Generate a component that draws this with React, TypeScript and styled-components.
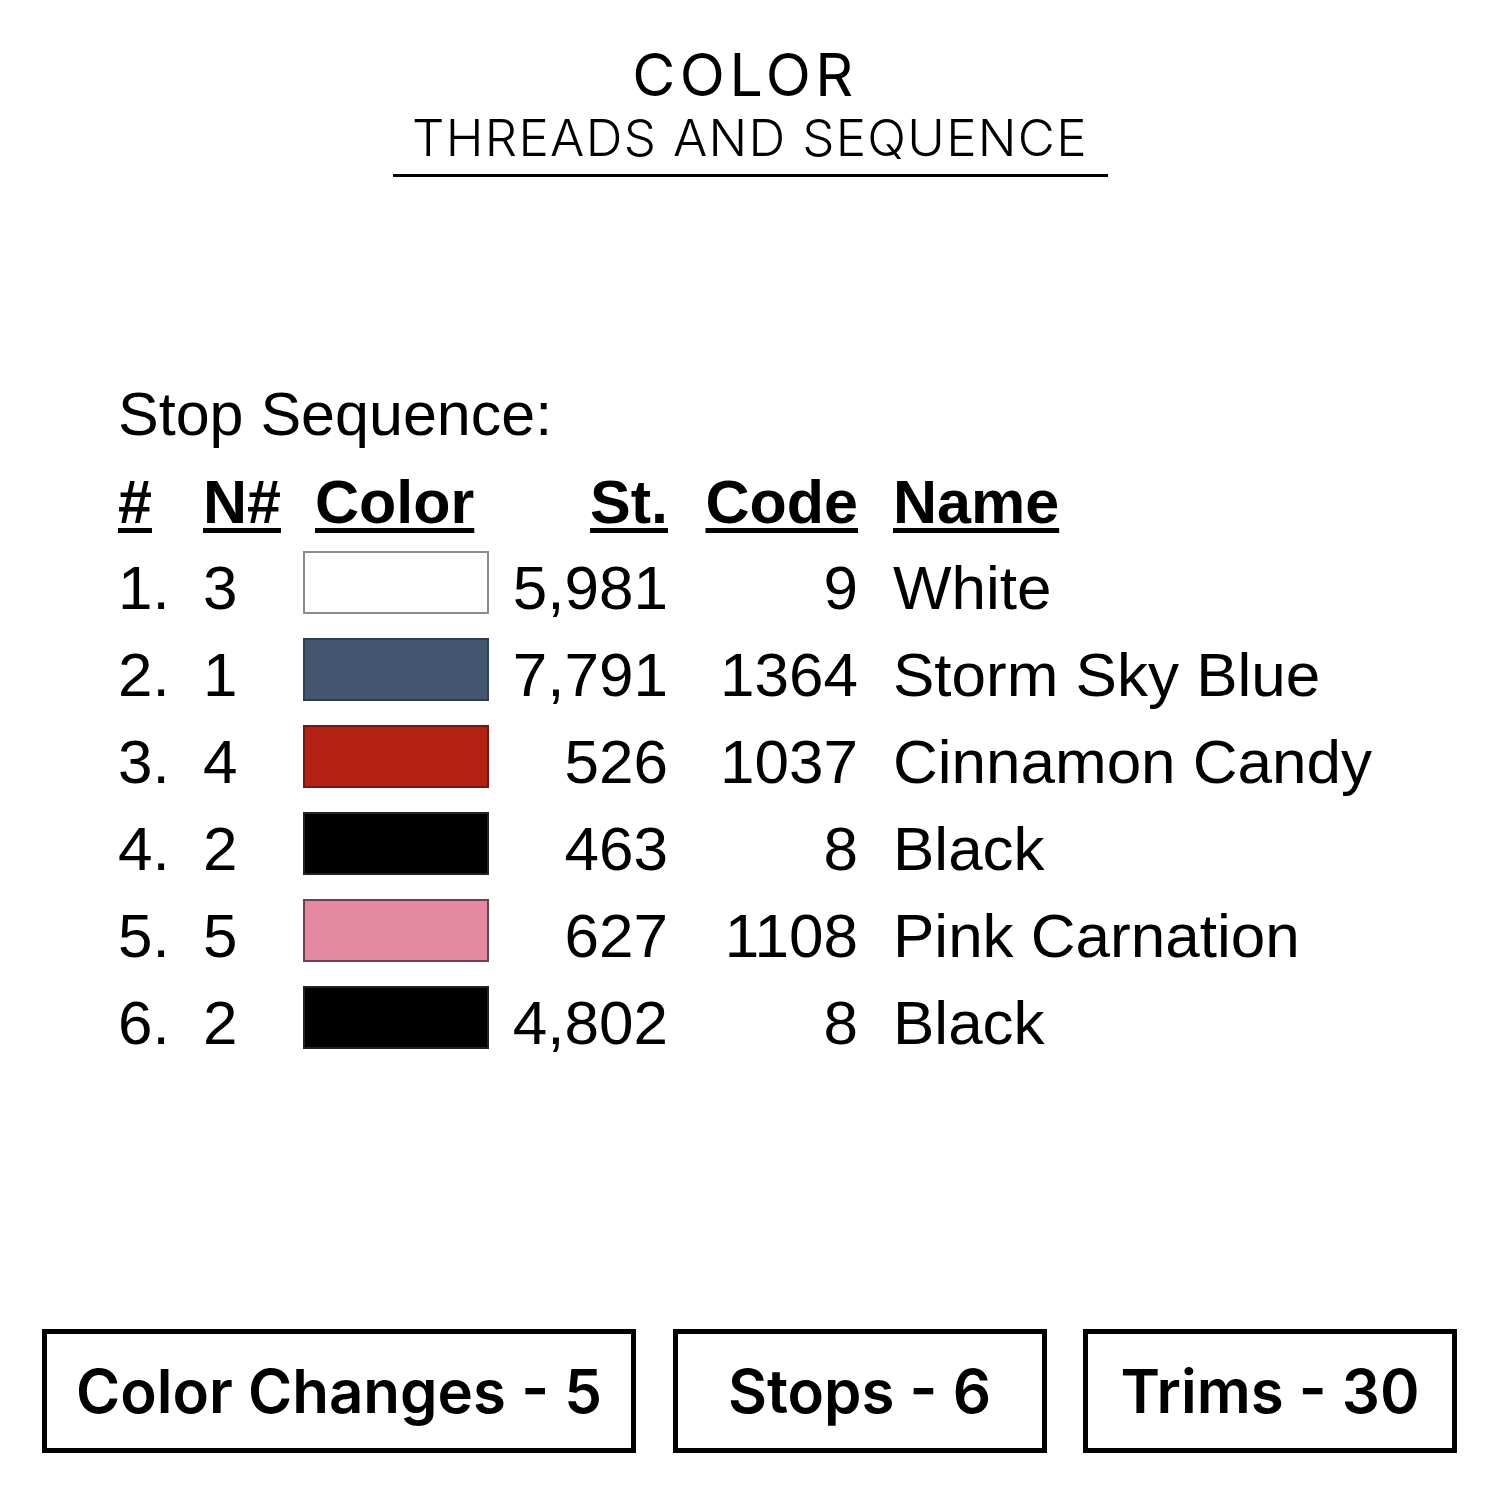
import styled, { createGlobalStyle } from "styled-components";

const GlobalStyle = createGlobalStyle`
  html, body {
    margin: 0;
    padding: 0;
    background: #fff;
  }
`;

const Page = styled.div`
  width: 1500px;
  height: 1500px;
  display: flex;
  flex-direction: column;
  align-items: stretch;
  background: #fff;
  color: #000;
`;

const Header = styled.header`
  display: flex;
  flex-direction: column;
  align-items: center;
  padding-top: 45px;
  font-family: Inter, "Open Sans", sans-serif;
`;

const Title = styled.h1`
  margin: 0;
  padding-right: 10px;
  font-size: 59px;
  line-height: 60px;
  font-weight: 400;
  letter-spacing: 4.5px;
`;

const Subtitle = styled.div`
  width: 715px;
  margin-top: 3px;
  padding-bottom: 6px;
  border-bottom: 3px solid #000;
  text-align: center;
  font-size: 51px;
  line-height: 60px;
  font-weight: 300;
  letter-spacing: 1.3px;
`;

const Sheet = styled.section`
  padding: 202px 0 0 118px;
  font-family: "Liberation Sans", Arial, sans-serif;
`;

const SheetLabel = styled.div`
  font-size: 61px;
  line-height: 70px;
`;

const Table = styled.div`
  margin-top: 12px;
  display: grid;
  grid-template-columns: 85px 100px 186px 179px 190px auto;
  grid-template-rows: 83px repeat(6, 87px);
  align-items: center;
  font-size: 62px;
  line-height: 87px;
`;

const Head = styled.div<{ $align?: "left" | "right"; $pad?: number }>`
  font-weight: 700;
  font-size: 61px;
  text-align: ${({ $align }) => $align || "left"};
  padding-left: ${({ $pad }) => $pad || 0}px;
  line-height: 83px;
  span {
    text-decoration: underline;
    text-decoration-thickness: 5px;
    text-underline-offset: 5px;
  }
`;

const Cell = styled.div<{ $align?: "left" | "right"; $pad?: number }>`
  text-align: ${({ $align }) => $align || "left"};
  padding-left: ${({ $pad }) => $pad || 0}px;
  white-space: nowrap;
`;

const Swatch = styled.div<{ $color: string; $edge: string }>`
  width: 186px;
  height: 63px;
  box-sizing: border-box;
  background: ${({ $color }) => $color};
  border: 2px solid ${({ $edge }) => $edge};
  align-self: center;
  margin-bottom: 10px;
`;

const Footer = styled.footer`
  margin-top: auto;
  display: flex;
  justify-content: space-between;
  padding: 0 43px 47px 42px;
  font-family: Inter, "Open Sans", sans-serif;
`;

const StatBox = styled.div<{ $width: number }>`
  width: ${({ $width }) => $width}px;
  height: 124px;
  box-sizing: border-box;
  border: 5px solid #000;
  display: flex;
  align-items: center;
  justify-content: center;
  font-size: 60px;
  font-weight: 600;
`;

type Stop = {
  n: number;
  color: string;
  edge: string;
  st: string;
  code: string;
  name: string;
};

const stops: Stop[] = [
  { n: 3, color: "#ffffff", edge: "#8c8c8c", st: "5,981", code: "9", name: "White" },
  { n: 1, color: "#43566f", edge: "#2e3d50", st: "7,791", code: "1364", name: "Storm Sky Blue" },
  { n: 4, color: "#b52014", edge: "#7a150e", st: "526", code: "1037", name: "Cinnamon Candy" },
  { n: 2, color: "#000000", edge: "#222222", st: "463", code: "8", name: "Black" },
  { n: 5, color: "#e588a2", edge: "#6d4250", st: "627", code: "1108", name: "Pink Carnation" },
  { n: 2, color: "#000000", edge: "#222222", st: "4,802", code: "8", name: "Black" },
];

export default function App() {
  return (
    <Page>
      <GlobalStyle />
      <Header>
        <Title>COLOR</Title>
        <Subtitle>THREADS AND SEQUENCE</Subtitle>
      </Header>

      <Sheet>
        <SheetLabel>Stop Sequence:</SheetLabel>
        <Table>
          <Head><span>#</span></Head>
          <Head><span>N#</span></Head>
          <Head $pad={12}><span>Color</span></Head>
          <Head $align="right"><span>St.</span></Head>
          <Head $align="right"><span>Code</span></Head>
          <Head $pad={35}><span>Name</span></Head>
          {stops.map((s, i) => (
            <>
              <Cell key={`i${i}`}>{i + 1}.</Cell>
              <Cell key={`n${i}`}>{s.n}</Cell>
              <Swatch key={`c${i}`} $color={s.color} $edge={s.edge} />
              <Cell key={`s${i}`} $align="right">{s.st}</Cell>
              <Cell key={`k${i}`} $align="right">{s.code}</Cell>
              <Cell key={`m${i}`} $pad={35}>{s.name}</Cell>
            </>
          ))}
        </Table>
      </Sheet>

      <Footer>
        <StatBox $width={594}>Color Changes - 5</StatBox>
        <StatBox $width={374}>Stops - 6</StatBox>
        <StatBox $width={374}>Trims - 30</StatBox>
      </Footer>
    </Page>
  );
}
